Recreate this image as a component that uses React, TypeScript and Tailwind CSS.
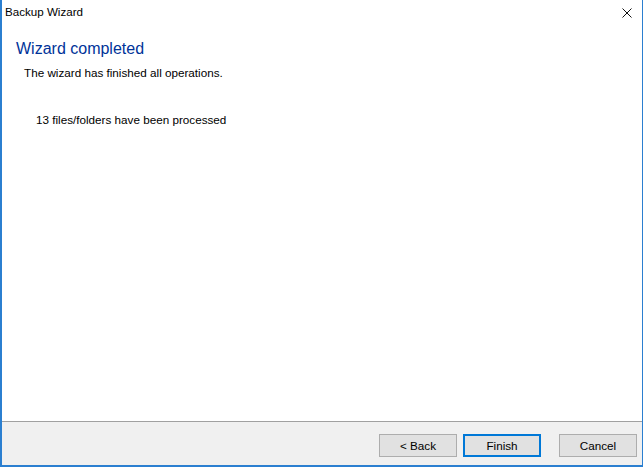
import React from 'react';

const font = { fontFamily: '"Liberation Sans", Arial, sans-serif' };

const Btn: React.FC<{ label: string; primary?: boolean }> = ({ label, primary }) => (
  <button
    className={`w-[78px] h-[23px] bg-[#e1e1e1] text-[11.7px] text-black flex items-center justify-center ${
      primary ? 'border-2 border-[#0078d7]' : 'border border-[#adadad]'
    }`}
  >
    {label}
  </button>
);

export default function App() {
  return (
    <div
      className="w-[643px] h-[467px] bg-white flex flex-col border-l-2 border-r border-b-2 border-[#2b7fd0] text-black"
      style={font}
    >
      {/* Title bar */}
      <div className="h-[24px] flex items-center justify-between pl-[3px] pr-[10px]">
        <span className="text-[11.6px]">Backup Wizard</span>
        <svg width="10" height="10" viewBox="0 0 10 10" className="mt-[1px]">
          <path d="M0.5 0.5 L9.5 9.5 M9.5 0.5 L0.5 9.5" stroke="#111" strokeWidth="1" />
        </svg>
      </div>

      {/* Content */}
      <div className="flex-1 flex flex-col pl-[14px]">
        <div className="mt-[14px] h-[22px] leading-[22px] text-[16px] text-[#003399]">Wizard completed</div>
        <div className="mt-[5px] pl-[8px] h-[16px] leading-[16px] text-[11.7px]">
          The wizard has finished all operations.
        </div>
        <div className="mt-[31px] pl-[20px] h-[16px] leading-[16px] text-[11.7px]">
          13 files/folders have been processed
        </div>
      </div>

      {/* Button panel */}
      <div className="h-[44px] border-t border-[#a0a0a0] bg-[#f0f0f0] flex justify-end pt-[12px] pr-[5px]">
        <div className="flex h-[23px]">
          <Btn label="< Back" />
          <div className="w-[6px]" />
          <Btn label="Finish" primary />
          <div className="w-[18px]" />
          <Btn label="Cancel" />
        </div>
      </div>
    </div>
  );
}
